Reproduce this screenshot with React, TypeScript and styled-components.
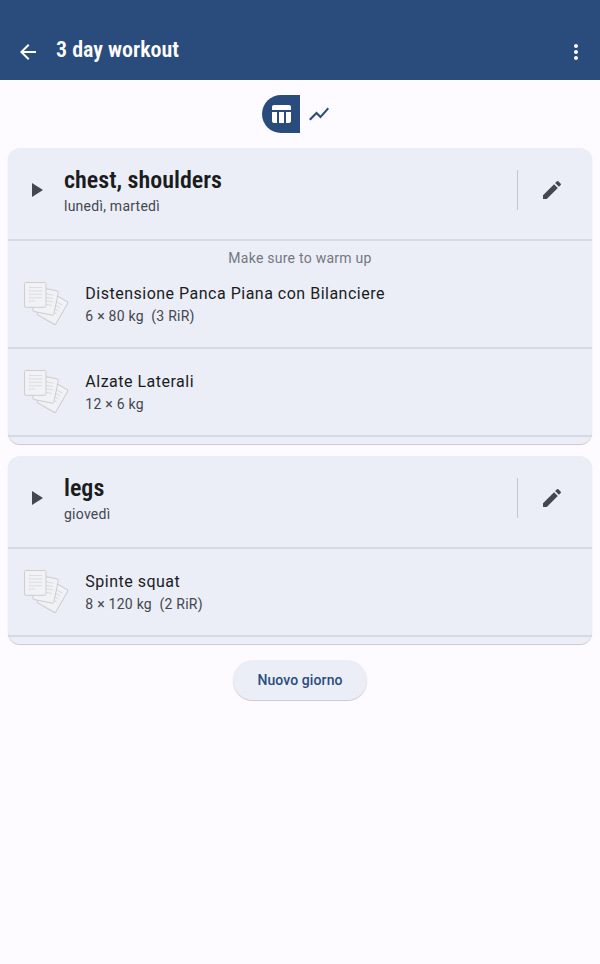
import React from 'react';
import styled, { createGlobalStyle } from 'styled-components';
import { MdArrowBack, MdEdit, MdMoreVert, MdPlayArrow, MdShowChart, MdTableChart } from 'react-icons/md';

const GlobalStyle = createGlobalStyle`
  * { box-sizing: border-box; }
  body { margin: 0; background: #fdfbff; font-family: Roboto, sans-serif; color: #1a1c1e; }
  button { border: 0; padding: 0; background: none; font: inherit; color: inherit; }
  svg { display: block; }
`;

const Page = styled.div`
  min-height: 964px;
  display: flex;
  flex-direction: column;
`;

const AppBar = styled.header`
  height: 80px;
  padding: 24px 12px 0 16px;
  display: flex;
  align-items: center;
  background: #2a4c7d;
  color: #fff;
`;

const BarTitle = styled.h1`
  flex: 1;
  margin: 0 0 5px 16px;
  font: 600 22px/28px 'Roboto Condensed', Roboto, sans-serif;
  font-stretch: 75%;
`;

const Switcher = styled.div`
  display: flex;
  justify-content: center;
  padding: 15px 0;
`;

const ViewButton = styled.button<{ $active?: boolean }>`
  width: 38px;
  height: 38px;
  display: grid;
  place-items: center;
  color: ${(p) => (p.$active ? '#fff' : '#2a4c7d')};
  background: ${(p) => (p.$active ? '#2a4c7d' : 'transparent')};
  border-radius: ${(p) => (p.$active ? '19px 0 0 19px' : '0 19px 19px 0')};
`;

const Days = styled.main`
  display: flex;
  flex-direction: column;
  gap: 12px;
  padding: 0 8px;
`;

const Card = styled.section`
  padding-bottom: 7px;
  border-radius: 12px;
  background: #ebeef6;
  box-shadow: 0 1px 1px rgba(0, 0, 0, 0.2);
`;

const CardHeader = styled.div`
  height: 93px;
  padding: 0 28px 8px 16px;
  display: flex;
  align-items: center;
  color: #43474e;
  border-bottom: 2px solid #d5d9e2;
`;

const DayText = styled.div`
  flex: 1;
  margin-left: 16px;
`;

const DayName = styled.h2`
  margin: 0;
  color: #1a1c1e;
  font: 600 24px/32px 'Roboto Condensed', Roboto, sans-serif;
  font-stretch: 75%;
`;

const Detail = styled.div`
  font-size: 14px;
  line-height: 20px;
  letter-spacing: 0.25px;
  white-space: pre;
  color: #43474e;
`;

const VerticalRule = styled.div`
  width: 1px;
  height: 40px;
  margin-right: 22px;
  background: #c3c6cf;
`;

const Note = styled.div`
  height: 20px;
  padding-top: 7px;
  text-align: center;
  font-size: 14px;
  line-height: 20px;
  letter-spacing: 0.25px;
  color: #75777f;
`;

const ExerciseRow = styled.div`
  height: 88px;
  padding: 0 16px;
  display: flex;
  align-items: center;
  gap: 16.3px;
  border-bottom: 2px solid #d5d9e2;
`;

const ExerciseText = styled.div`
  flex: 1;
`;

const ExerciseName = styled.div`
  font-size: 16px;
  line-height: 24px;
  letter-spacing: 0.5px;
`;

const NewDayButton = styled.button`
  align-self: center;
  width: 134px;
  height: 40px;
  margin-top: 16px;
  border-radius: 20px;
  background: #ebeef6;
  box-shadow: 0 1px 1px rgba(0, 0, 0, 0.2);
  color: #2a4c7d;
  font-size: 14px;
  font-weight: 500;
  letter-spacing: 0.1px;
`;

const Sheet = ({ transform }: { transform?: string }) => (
  <g transform={transform}>
    <rect x="0.5" y="0.5" width="21.5" height="24.8" rx="1.3" fill="#f1f2f6" stroke="#c9cacd" strokeWidth="0.9" />
    <path d="M5 5.5h13M5 9h13M5 12.2h13M5 15.8h13M5 19h6" stroke="#d6d7da" strokeWidth="0.8" />
  </g>
);

const SheetsIcon = () => (
  <svg width="45" height="44" viewBox="0 0 45 44" fill="none" overflow="visible">
    <Sheet transform="translate(25.5 8.9) rotate(30) scale(1 1.05)" />
    <Sheet transform="translate(13.1 4.3) rotate(11.5)" />
    <Sheet />
  </svg>
);

interface Exercise {
  name: string;
  sets: string;
  note?: string;
}

const days: { name: string; when: string; exercises: Exercise[] }[] = [
  {
    name: 'chest, shoulders',
    when: 'lunedì, martedì',
    exercises: [
      { name: 'Distensione Panca Piana con Bilanciere', sets: '6 × 80 kg  (3 RiR)', note: 'Make sure to warm up' },
      { name: 'Alzate Laterali', sets: '12 × 6 kg' },
    ],
  },
  { name: 'legs', when: 'giovedì', exercises: [{ name: 'Spinte squat', sets: '8 × 120 kg  (2 RiR)' }] },
];

export default function App() {
  return (
    <Page>
      <GlobalStyle />
      <AppBar>
        <MdArrowBack size={24} />
        <BarTitle>3 day workout</BarTitle>
        <MdMoreVert size={24} />
      </AppBar>
      <Switcher>
        <ViewButton $active><MdTableChart size={24} /></ViewButton>
        <ViewButton><MdShowChart size={24} /></ViewButton>
      </Switcher>
      <Days>
        {days.map((day) => (
          <Card key={day.name}>
            <CardHeader>
              <MdPlayArrow size={24} />
              <DayText>
                <DayName>{day.name}</DayName>
                <Detail>{day.when}</Detail>
              </DayText>
              <VerticalRule />
              <MdEdit size={24} />
            </CardHeader>
            {day.exercises.map((ex) => (
              <React.Fragment key={ex.name}>
                {ex.note && <Note>{ex.note}</Note>}
                <ExerciseRow>
                  <SheetsIcon />
                  <ExerciseText>
                    <ExerciseName>{ex.name}</ExerciseName>
                    <Detail>{ex.sets}</Detail>
                  </ExerciseText>
                </ExerciseRow>
              </React.Fragment>
            ))}
          </Card>
        ))}
      </Days>
      <NewDayButton>Nuovo giorno</NewDayButton>
    </Page>
  );
}
